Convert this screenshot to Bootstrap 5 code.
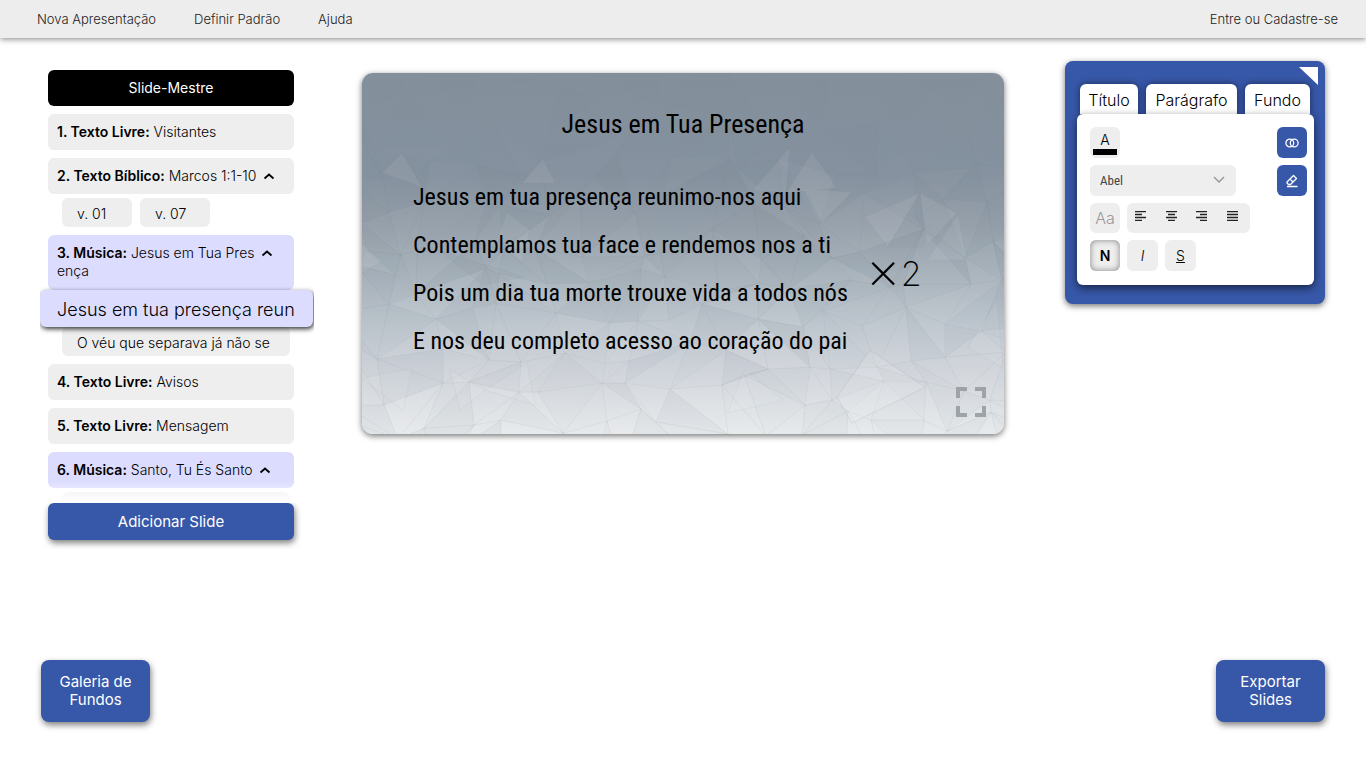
<!DOCTYPE html>
<html lang="pt-BR">
<head>
<meta charset="utf-8">
<meta name="viewport" content="width=device-width, initial-scale=1">
<title>Editor de Slides</title>
<link href="https://cdn.jsdelivr.net/npm/bootstrap@5.3.0/dist/css/bootstrap.min.css" rel="stylesheet">
<style>
  :root { --azul: #3757a8; --cinza: #eeeeee; --lilas: #dcdcff; }
  body { font-family: Inter, "Liberation Sans", sans-serif; font-size: 14px; font-weight: 300; line-height: 18px; color: #000; background: #fff; }
  .topo { background: #ededed; height: 38px; padding: 0 28px 0 37px; box-shadow: 0 1px 6px rgba(0,0,0,.5); font-size: 13px; }
  .topo a { color: #222; text-decoration: none; }
  .topo .menu { gap: 38px; }
  .area { padding: 23px 41px 0 40px; }
  .lateral { width: 274px; margin-right: 48px; padding-top: 9px; }
  .lista { height: 433px; overflow: hidden; position: relative; }
  .lista::after { content: ""; position: absolute; inset: auto 0 0 0; height: 22px; background: linear-gradient(rgba(255,255,255,0), #fff); }
  .grupo { gap: 8px; }
  .item { display: flex; width: 246px; margin-left: 8px; padding: 9px; border: 0; border-radius: 6px; background: var(--cinza); text-align: left; font-weight: 300; gap: 5px; white-space: nowrap; }
  .item b { font-weight: 600; }
  .item svg { margin-top: 4px; }
  .item.mestre { background: #000; color: #fff; justify-content: center; font-weight: 400; }
  .item.musica { background: var(--lilas); }
  .item.dupla { padding-bottom: 10px; }
  .sub { margin: 4px 24px 0 22px; gap: 4px 8px; }
  .verso { border: 0; border-radius: 6px; background: var(--cinza); padding: 7px 15px 4px; height: 29px; text-align: left; font-size: 14px; font-weight: 300; white-space: nowrap; }
  .verso.curto { width: 70px; }
  .verso span { display: block; }
  .verso.ativo { position: relative; z-index: 2; height: 37px; margin: -4px -23px -4px -22px; padding: 9px 17px 6px; background: var(--lilas); font-size: 18px; line-height: 22px; box-shadow: 1px 2px 5px rgba(0,0,0,.8); }
  .azul { background: var(--azul); color: #fff; border: 0; box-shadow: 1px 3px 6px rgba(0,0,0,.5); font-size: 15px; font-weight: 400; }
  .adicionar { width: 246px; height: 37px; margin-left: 8px; border-radius: 6px; }
  .palco { width: 47vw; margin-top: 12px; aspect-ratio: 16 / 9; border-radius: 11px; overflow: hidden; position: relative; box-shadow: 0 2px 6px rgba(0,0,0,.55); font-family: "Roboto Condensed", "Liberation Sans Narrow", "Liberation Sans", sans-serif; font-weight: 400; }
  .palco .fundo { position: absolute; inset: 0; width: 100%; height: 100%; }
  .conteudo { position: relative; padding: 34px 51px 0; }
  .conteudo h1 { font-size: 26px; line-height: 34px; font-weight: 400; margin: 0 0 32px; text-align: center; }
  .letra { font-size: 24px; line-height: 48px; white-space: nowrap; }
  .vezes { font: 200 34px/48px Inter, sans-serif; margin: 10px 0 0 18px; }
  .vezes .sinal { font-size: 54px; line-height: 36px; padding-bottom: 8px; }
  .tela { position: absolute; right: 18px; bottom: 17px; border: 0; padding: 0; background: none; line-height: 0; }
  .painel { width: 260px; background: var(--azul); border-radius: 8px; padding: 23px 11px 19px 12px; position: relative; box-shadow: 0 2px 6px rgba(0,0,0,.55); }
  .abas { gap: 8px; padding: 0 4px 0 3px; }
  .aba { border: 0; background: #fff; height: 30px; padding: 2px 0 0; border-radius: 6px 6px 0 0; font-size: 16px; font-weight: 300; box-shadow: 0 0 7px rgba(0,0,0,.5); }
  .caixa { position: relative; background: #fff; border-radius: 6px; padding: 13px 7px 14px 13px; box-shadow: 0 3px 8px rgba(0,0,0,.6); }
  .linhas, .linha { gap: 7px; }
  .ferr { width: 30px; height: 31px; border: 0; border-radius: 6px; background: var(--cinza); padding: 0; font-weight: 300; }
  .ferr svg { display: block; margin: 0 auto; }
  .ferr.larga { width: 31px; }
  .ferr.azulada { background: var(--azul); color: #fff; }
  .ferr.caixa-alta { height: 30px; color: #999; font-size: 16px; }
  .ferr.dentro { font-weight: 600; box-shadow: inset 0 0 6px rgba(0,0,0,.45); }
  .cor { display: block; width: 24px; height: 6px; background: #000; margin: 0 auto; }
  .fonte { width: 146px; height: 31px; border: 0; border-radius: 6px; padding: 0 32px 0 10px; color: #444; font-family: "Roboto Condensed", "Liberation Sans Narrow", sans-serif; font-size: 13px; background: var(--cinza) url("data:image/svg+xml,%3Csvg xmlns='http://www.w3.org/2000/svg' viewBox='0 0 12 12'%3E%3Cpath d='M1 2l5 5 5-5' fill='none' stroke='%23999' stroke-width='1.5'/%3E%3C/svg%3E") no-repeat right 11px center / 12px 12px; }
  .alinha { width: 123px; height: 30px; background: var(--cinza); border-radius: 6px; padding: 0 11px 4px 7px; }
  .alinha button { border: 0; background: none; padding: 0; line-height: 0; }
  .canto { position: absolute; right: 7px; top: 6px; width: 19px; height: 18px; border: 0; padding: 0; background: #fff; clip-path: polygon(0 0, 100% 0, 100% 100%); }
  .rodape { padding: 0 41px 46px; }
  .grande { width: 109px; height: 62px; border-radius: 8px; padding: 0 10px; }
</style>
</head>
<body class="min-vh-100 d-flex flex-column">
<nav class="topo d-flex align-items-center justify-content-between" aria-label="Principal">
  <div class="menu d-flex"><a href="#">Nova Apresentação</a><a href="#">Definir Padrão</a><a href="#">Ajuda</a></div>
  <a href="#">Entre ou Cadastre-se</a>
</nav>

<main class="area d-flex align-items-start flex-grow-1">
  <aside class="lateral flex-shrink-0">
    <div class="lista">
      <div class="grupo d-flex flex-column">
        <button class="item mestre">Slide-Mestre</button>
        <button class="item"><span><b>1. Texto Livre:</b> Visitantes</span></button>
        <div>
          <button class="item"><span><b>2. Texto Bíblico:</b> Marcos 1:1-10</span><svg width="14" height="10" viewBox="0 0 14 10"><path d="M2.500 7.500L7 3.500l4.500 4" fill="none" stroke="#000" stroke-width="1.800"/></svg></button>
          <div class="sub d-flex"><button class="verso curto">v. 01</button><button class="verso curto">v. 07</button></div>
        </div>
        <div>
          <button class="item musica dupla"><span><b>3. Música:</b> Jesus em Tua Pres<br>ença</span><svg width="14" height="10" viewBox="0 0 14 10"><path d="M2.500 7.500L7 3.500l4.500 4" fill="none" stroke="#000" stroke-width="1.800"/></svg></button>
          <div class="sub d-flex flex-column">
            <button class="verso ativo"><span>Jesus em tua presença reun</span></button>
            <button class="verso"><span>O véu que separava já não se</span></button>
          </div>
        </div>
        <button class="item"><span><b>4. Texto Livre:</b> Avisos</span></button>
        <button class="item"><span><b>5. Texto Livre:</b> Mensagem</span></button>
        <div>
          <button class="item musica"><span><b>6. Música:</b> Santo, Tu És Santo</span><svg width="14" height="10" viewBox="0 0 14 10"><path d="M2.500 7.500L7 3.500l4.500 4" fill="none" stroke="#000" stroke-width="1.800"/></svg></button>
          <div class="sub d-flex flex-column"><button class="verso" aria-label="Verso"></button></div>
        </div>
      </div>
    </div>
    <button class="azul adicionar">Adicionar Slide</button>
  </aside>

  <section class="palco flex-shrink-0">
    <svg class="fundo" viewBox="0 0 642 361" preserveAspectRatio="none" aria-hidden="true">
      <defs><linearGradient id="ceu" x1="0" y1="0" x2="0" y2="1">
        <stop offset="0" stop-color="#838f9b"/><stop offset=".28" stop-color="#85919e"/><stop offset=".42" stop-color="#939ea9"/><stop offset=".55" stop-color="#a5b0b9"/><stop offset=".7" stop-color="#bec6ce"/><stop offset=".8" stop-color="#cdd1d8"/><stop offset="1" stop-color="#e7eaec"/>
      </linearGradient></defs>
      <rect width="642" height="361" fill="url(#ceu)"/>
      <g id="malha"></g>
      <g fill="#fff" fill-opacity=".07" stroke="#78828c" stroke-opacity=".06">
        <path d="M20 100L40 80 60 114zM160 110L181 85 193 110zM391 117L428 74 424 120zM424 120L450 79 475 115zM503 144L558 120 526 174zM558 120L595 140 565 172zM565 187L596 142 605 187zM136 164L145 139 168 157 160 190zM0 171L20 188 0 200z"/>
        <path d="M508 277L563 314 490 350 475 324zM606 274L635 227 641 295zM365 340L383 297 421 327zM0 305L50 295 41 337zM88 297L98 337 123 317zM165 290L123 317 173 332zM441 116L490 119 460 150z"/>
        <path d="M76 177L163 204 121 212z" fill="#6c7c8b"/><path d="M558 120L562 175 526 174z" fill="#7f8c98"/>
        <path d="M508 277L563 314 490 350 475 324z"/>
      </g>
    </svg>
    <div class="conteudo">
      <h1>Jesus em Tua Presença</h1>
      <div class="d-flex align-items-center">
        <div class="letra">Jesus em tua presença reunimo-nos aqui<br>Contemplamos tua face e rendemos nos a ti<br>Pois um dia tua morte trouxe vida a todos nós<br>E nos deu completo acesso ao coração do pai</div>
        <div class="vezes d-flex align-items-center"><span class="sinal">×</span><span>2</span></div>
      </div>
    </div>
    <button class="tela" aria-label="Tela cheia"><svg width="30" height="30" viewBox="0 0 30 30"><path d="M2 11V2h9M19 2h9v9M28 19v9h-9M11 28H2v-9" fill="none" stroke="#9ea3a7" stroke-width="4"/></svg></button>
  </section>

  <section class="painel ms-auto flex-shrink-0">
    <button class="canto" aria-label="Recolher painel"></button>
    <div class="abas d-flex">
      <button class="aba" style="flex:58">Título</button><button class="aba" style="flex:91">Parágrafo</button><button class="aba" style="flex:65">Fundo</button>
    </div>
    <div class="caixa d-flex justify-content-between">
      <div class="linhas d-flex flex-column">
        <button class="ferr" aria-label="Cor do texto">A<span class="cor"></span></button>
        <select class="fonte form-select" aria-label="Fonte"><option>Abel</option></select>
        <div class="linha d-flex">
          <button class="ferr caixa-alta">Aa</button>
          <div class="alinha d-flex align-items-center justify-content-between">
            <button aria-label="Alinhar à esquerda"><svg width="13" height="10" viewBox="0 0 13 10"><path d="M1 .5h11M1 3.500h7M1 6.500h11M1 9.500h7" stroke="#222" stroke-width="1.500"/></svg></button>
            <button aria-label="Centralizar"><svg width="13" height="10" viewBox="0 0 13 10"><path d="M1 .5h11M3 3.500h7M1 6.500h11M3 9.500h7" stroke="#222" stroke-width="1.500"/></svg></button>
            <button aria-label="Alinhar à direita"><svg width="13" height="10" viewBox="0 0 13 10"><path d="M1 .5h11M5 3.500h7M1 6.500h11M5 9.500h7" stroke="#222" stroke-width="1.500"/></svg></button>
            <button aria-label="Justificar"><svg width="13" height="10" viewBox="0 0 13 10"><path d="M1 .5h11M1 3.500h11M1 6.500h11M1 9.500h11" stroke="#222" stroke-width="1.500"/></svg></button>
          </div>
        </div>
        <div class="linha d-flex">
          <button class="ferr dentro">N</button><button class="ferr larga"><i>I</i></button><button class="ferr larga"><u>S</u></button>
        </div>
      </div>
      <div class="linhas d-flex flex-column">
        <button class="ferr azulada" aria-label="Aplicar a todos"><svg width="14" height="14" viewBox="0 0 14 14"><g fill="none" stroke="#fff" stroke-width="1.300"><circle cx="4.800" cy="7" r="3.900"/><circle cx="9.200" cy="7" r="3.900"/></g></svg></button>
        <button class="ferr azulada" aria-label="Limpar formatação"><svg width="14" height="14" viewBox="0 0 14 14"><path d="M8.500 1.500l3 3-6 6h-2L2 9V8zM5 5l3.500 3.500M2 12.500h10.500" fill="none" stroke="#fff" stroke-width="1.300" stroke-linejoin="round"/></svg></button>
      </div>
    </div>
  </section>
</main>

<footer class="rodape d-flex justify-content-between">
  <button class="azul grande">Galeria de Fundos</button>
  <button class="azul grande">Exportar Slides</button>
</footer>

<script src="https://cdn.jsdelivr.net/npm/bootstrap@5.3.0/dist/js/bootstrap.bundle.min.js"></script>
<script>
  // Low-poly mesh: jittered grid, faint at the top of the slide and clearer below
  let s = 17;
  const rnd = () => (s = (s * 16807) % 2147483647) / 2147483647;
  const C = 17, R = 11, p = [];
  for (let r = 0; r <= R; r++) {
    p.push([]);
    for (let c = 0; c <= C; c++) p[r].push([Math.round((c + rnd() * .9 - .7) * 642 / (C - 1)), Math.round((r + rnd() * .9 - .7) * 361 / (R - 1))]);
  }
  const tri = (a, b, c) => {
    const k = Math.max(.1, Math.min(1, ((a[1] + b[1] + c[1]) / 3 - 50) / 140)), v = rnd() - .5;
    return `<path d="M${a}L${b}L${c}z" fill="${v > 0 ? '#fff' : '#74808c'}" fill-opacity="${(Math.abs(v) * .14 * k).toFixed(3)}" stroke="#76808a" stroke-opacity="${(.06 * k).toFixed(3)}" stroke-width=".8"/>`;
  };
  let h = '';
  for (let r = 0; r < R; r++) for (let c = 0; c < C; c++) {
    const a = p[r][c], b = p[r][c + 1], d = p[r + 1][c], e = p[r + 1][c + 1];
    h += rnd() > .5 ? tri(a, b, d) + tri(b, e, d) : tri(a, b, e) + tri(a, e, d);
  }
  document.getElementById('malha').innerHTML = h;
</script>
</body>
</html>
